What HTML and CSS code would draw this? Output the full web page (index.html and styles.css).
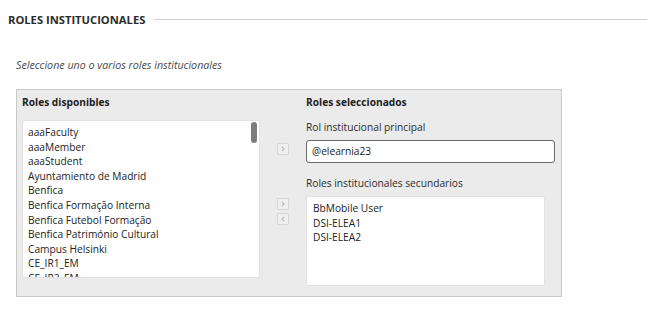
FILE: index.html
```html
<!DOCTYPE html>
<html lang="es">
<head>
<meta charset="utf-8">
<title>Roles institucionales</title>
<link rel="stylesheet" href="styles.css">
</head>
<body>
<div class="page">
  <div class="section-head">
    <h2 class="section-title">ROLES INSTITUCIONALES</h2>
    <div class="section-rule"></div>
  </div>
  <p class="hint">Seleccione uno o varios roles institucionales</p>
  <div class="panel">
    <div class="col-left">
      <div class="col-title">Roles disponibles</div>
      <div class="listbox listbox-avail">
        <ul class="items">
          <li>aaaFaculty</li>
          <li>aaaMember</li>
          <li>aaaStudent</li>
          <li>Ayuntamiento de Madrid</li>
          <li>Benfica</li>
          <li>Benfica Formação Interna</li>
          <li>Benfica Futebol Formação</li>
          <li>Benfica Património Cultural</li>
          <li>Campus Helsinki</li>
          <li>CE_IR1_EM</li>
          <li>CE_IR2_EM</li>
        </ul>
        <div class="thumb"></div>
      </div>
    </div>
    <div class="col-buttons">
      <button class="move move-first" aria-label="Añadir rol principal">
        <svg width="6" height="6" viewBox="0 0 6 6"><path d="M2 1 L4 3 L2 5" fill="none" stroke="#b9b9b9" stroke-width="1.2"/></svg>
      </button>
      <button class="move move-add" aria-label="Añadir roles secundarios">
        <svg width="6" height="6" viewBox="0 0 6 6"><path d="M2 1 L4 3 L2 5" fill="none" stroke="#b9b9b9" stroke-width="1.2"/></svg>
      </button>
      <button class="move move-remove" aria-label="Quitar roles secundarios">
        <svg width="6" height="6" viewBox="0 0 6 6"><path d="M4 1 L2 3 L4 5" fill="none" stroke="#b9b9b9" stroke-width="1.2"/></svg>
      </button>
    </div>
    <div class="col-right">
      <div class="col-title">Roles seleccionados</div>
      <div class="field-label field-label-main">Rol institucional principal</div>
      <div class="text-input">@elearnia23</div>
      <div class="field-label field-label-sec">Roles institucionales secundarios</div>
      <div class="listbox listbox-sel">
        <ul class="items">
          <li>BbMobile User</li>
          <li>DSI-ELEA1</li>
          <li>DSI-ELEA2</li>
        </ul>
      </div>
    </div>
  </div>
</div>
</body>
</html>
```
FILE: styles.css
```css
html, body {
  margin: 0;
  padding: 0;
  background: #ffffff;
}
body {
  font-family: "Open Sans", "Noto Sans", sans-serif;
  color: #262626;
}
.page {
  width: 647px;
  height: 318px;
  overflow: hidden;
}
.section-head {
  display: flex;
  align-items: center;
  padding: 12px 0 0 8px;
  height: 15px;
}
.section-title {
  margin: 0;
  font-size: 11.2px;
  line-height: 15px;
  font-weight: 700;
  color: #2b2b2b;
  white-space: nowrap;
}
.section-rule {
  flex: 1;
  height: 1px;
  background: #cfcfcf;
  margin-left: 9px;
  margin-top: -1px;
}
.hint {
  margin: 31px 0 0 16px;
  font-size: 10.7px;
  line-height: 15px;
  font-style: italic;
  color: #4a4a4a;
}
.panel {
  margin: 16px 0 0 16px;
  width: 533px;
  height: 201px;
  padding: 5px 6px 0 5px;
  background: #ebebeb;
  border: 1px solid #c9c9c9;
  display: flex;
}
.col-title {
  font-size: 10.2px;
  line-height: 15px;
  font-weight: 700;
  color: #222;
}
.col-left {
  width: 238px;
  display: flex;
  flex-direction: column;
}
.listbox {
  background: #ffffff;
  border-radius: 2px;
  position: relative;
  overflow: hidden;
  box-sizing: border-box;
}
.listbox-avail {
  margin-top: 10px;
  height: 158px;
  border: 1px solid #e2e2e2;
}
.items {
  list-style: none;
  margin: 0;
  padding: 4px 6px 0 5px;
  font-size: 10.2px;
  line-height: 14.6px;
  color: #222;
}
.thumb {
  position: absolute;
  top: 1px;
  right: 2px;
  width: 6px;
  height: 21px;
  border-radius: 3px;
  background: #7d7d7d;
}
.col-buttons {
  width: 46px;
  display: flex;
  flex-direction: column;
  align-items: flex-start;
  padding-left: 17px;
  box-sizing: border-box;
}
.move {
  width: 12px;
  height: 12px;
  padding: 0;
  margin: 0;
  border: 1px solid #d6d6d6;
  border-radius: 1px;
  background: #efefef;
  display: flex;
  align-items: center;
  justify-content: center;
}
.move-first { margin-top: 48px; }
.move-add { margin-top: 43px; }
.move-remove { margin-top: 3px; }
.col-right {
  width: 249px;
  display: flex;
  flex-direction: column;
}
.field-label {
  font-size: 10.2px;
  line-height: 15px;
  color: #2b2b2b;
}
.field-label-main { margin-top: 10px; }
.field-label-sec { margin-top: 13px; }
.text-input {
  margin-top: 5px;
  height: 23px;
  box-sizing: border-box;
  border: 1px solid #6a6a6a;
  border-radius: 3px;
  background: #fff;
  padding: 0 5px;
  font-size: 10.2px;
  line-height: 21px;
  color: #222;
}
.listbox-sel {
  margin-top: 5px;
  width: 239px;
  height: 90px;
  border: 1px solid #e2e2e2;
}
.listbox-sel .items {
  padding: 4px 6px 0 6px;
}
```
